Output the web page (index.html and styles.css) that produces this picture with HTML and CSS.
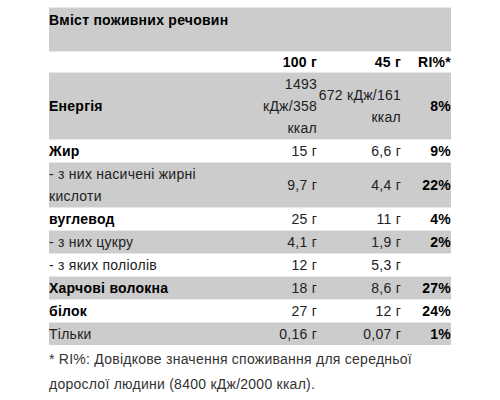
FILE: index.html
```html
<!DOCTYPE html>
<html lang="uk">
  <head>
    <meta charset="UTF-8" />
    <title>Вміст поживних речовин</title>
    <link rel="stylesheet" href="styles.css">
  </head>
  <body>
    <div class="nutrition">
      <table class="nutri-table">
        <colgroup>
          <col class="col-label" />
          <col class="col-100" />
          <col class="col-portion" />
          <col class="col-ri" />
        </colgroup>
        <tr class="gray title-row">
          <th colspan="4" class="title">Вміст поживних речовин</th>
        </tr>
        <tr class="head-row">
          <td></td>
          <td class="num bold">100 г</td>
          <td class="num bold">45 г</td>
          <td class="num bold">RI%*</td>
        </tr>
        <tr class="gray">
          <td class="label bold">Енергія</td>
          <td class="num">1493 кДж/358 ккал</td>
          <td class="num">672 кДж/161 ккал</td>
          <td class="num bold">8%</td>
        </tr>
        <tr>
          <td class="label bold">Жир</td>
          <td class="num">15 г</td>
          <td class="num">6,6 г</td>
          <td class="num bold">9%</td>
        </tr>
        <tr class="gray">
          <td class="label">- з них насичені жирні кислоти</td>
          <td class="num">9,7 г</td>
          <td class="num">4,4 г</td>
          <td class="num bold">22%</td>
        </tr>
        <tr>
          <td class="label bold">вуглевод</td>
          <td class="num">25 г</td>
          <td class="num">11 г</td>
          <td class="num bold">4%</td>
        </tr>
        <tr class="gray">
          <td class="label">- з них цукру</td>
          <td class="num">4,1 г</td>
          <td class="num">1,9 г</td>
          <td class="num bold">2%</td>
        </tr>
        <tr>
          <td class="label">- з яких поліолів</td>
          <td class="num">12 г</td>
          <td class="num">5,3 г</td>
          <td class="num bold"></td>
        </tr>
        <tr class="gray">
          <td class="label bold">Харчові волокна</td>
          <td class="num">18 г</td>
          <td class="num">8,6 г</td>
          <td class="num bold">27%</td>
        </tr>
        <tr>
          <td class="label bold">білок</td>
          <td class="num">27 г</td>
          <td class="num">12 г</td>
          <td class="num bold">24%</td>
        </tr>
        <tr class="gray">
          <td class="label">Тільки</td>
          <td class="num">0,16 г</td>
          <td class="num">0,07 г</td>
          <td class="num bold">1%</td>
        </tr>
      </table>
      <p class="footnote">* RI%: Довідкове значення споживання для середньої дорослої людини (8400 кДж/2000 ккал).</p>
    </div>
  </body>
</html>
```

FILE: styles.css
```css
body {
  margin: 0;
  padding: 7px 49px 0;
  background-color: #fff;
  font-family: 'Liberation Sans', Arial, sans-serif;
  font-size: 14px;
  letter-spacing: 0.25px;
  color: #222;
}

.nutrition {
  width: 402px;
}

.nutri-table {
  width: 100%;
  table-layout: fixed;
  border-collapse: collapse;
  line-height: 22px;
}

.col-label {
  width: 208px;
}

.col-100 {
  width: 60px;
}

.col-portion {
  width: 84px;
}

.col-ri {
  width: 50px;
}

.nutri-table td,
.nutri-table th {
  padding: 0;
  vertical-align: middle;
}

.nutri-table tr {
  border-top: 1px solid #e8e8e8;
}

.gray {
  background-color: #ccc;
}

.title-row {
  height: 44px;
}

.title {
  text-align: left;
  vertical-align: top !important;
  padding-top: 1px !important;
  color: #000;
}

.head-row {
  line-height: 20px;
}

.label {
  padding-right: 12px !important;
}

.num {
  text-align: right;
}

.bold {
  font-weight: bold;
  color: #000;
}

.footnote {
  margin: 2px 0 0;
  line-height: 25px;
  color: #333;
}
```
